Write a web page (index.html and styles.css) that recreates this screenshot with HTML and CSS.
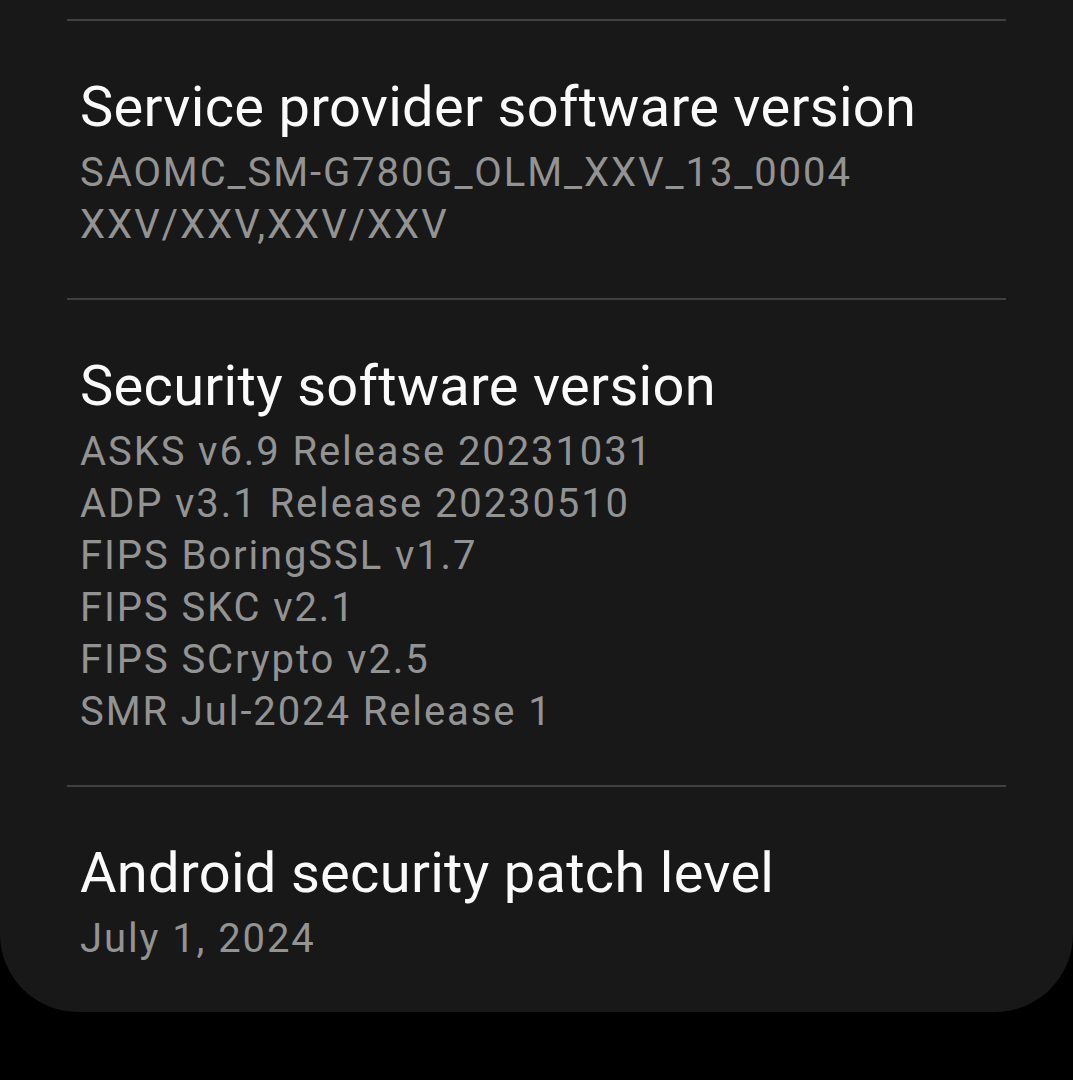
FILE: index.html
```html
<!DOCTYPE html>
<html lang="en">
<head>
  <meta charset="UTF-8" />
  <meta name="viewport" content="width=device-width, initial-scale=1.0" />
  <title>Software information</title>
  <link rel="stylesheet" href="styles.css">
</head>
<body>
  <div class="card">
    <div class="item">
      <div class="title">Service provider software version</div>
      <div class="value">SAOMC_SM-G780G_OLM_XXV_13_0004</div>
      <div class="value">XXV/XXV,XXV/XXV</div>
    </div>

    <div class="item">
      <div class="title">Security software version</div>
      <div class="value">ASKS v6.9 Release 20231031</div>
      <div class="value">ADP v3.1 Release 20230510</div>
      <div class="value">FIPS BoringSSL v1.7</div>
      <div class="value">FIPS SKC v2.1</div>
      <div class="value">FIPS SCrypto v2.5</div>
      <div class="value">SMR Jul-2024 Release 1</div>
    </div>

    <div class="item">
      <div class="title">Android security patch level</div>
      <div class="value">July 1, 2024</div>
    </div>
  </div>
</body>
</html>
```

FILE: styles.css
```css
body {
  margin: 0;
  background: #000;
  font-family: Roboto, 'Noto Sans', sans-serif;
}
.card {
  background: #181818;
  padding-top: 19px;
  border-radius: 0 0 78px 78px;
}
.item {
  border-top: 2px solid #404040;
  margin: 0 67px;
  padding: 54px 0 47px 13px;
}
.title {
  color: #fafafa;
  font-size: 56px;
  line-height: 64px;
  letter-spacing: 0.3px;
  margin-bottom: 8px;
}
.value {
  color: #939393;
  font-size: 40px;
  line-height: 52px;
  letter-spacing: 1.9px;
}
```
